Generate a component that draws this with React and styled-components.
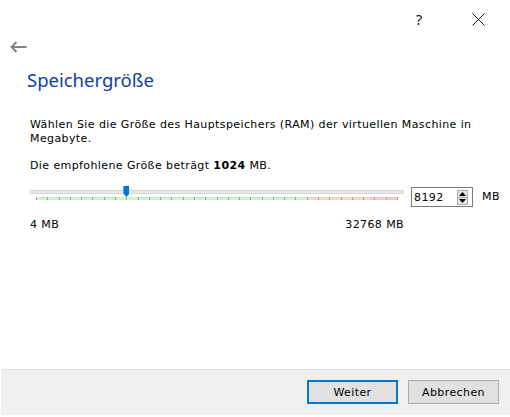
import React from 'react';
import styled, { createGlobalStyle } from 'styled-components';

const GlobalStyle = createGlobalStyle`
    html, body {
        margin: 0;
        padding: 0;
        background: #ffffff;
    }
    * {
        box-sizing: border-box;
    }
`;

const MIN = 4;
const MAX = 32768;
const VALUE = 8192;
const TICKS = 33;

export const Page = styled.div`
    display: flex;
    flex-direction: column;
    width: 510px;
    height: 417px;
    background: #ffffff;
    font-family: "DejaVu Sans", Verdana, sans-serif;
    color: #000000;
`;

export const TopBar = styled.div`
    display: flex;
    justify-content: flex-end;
    align-items: center;
    height: 38px;
    padding-right: 24px;
    gap: 43px;
`;

export const TopButton = styled.div`
    display: flex;
    align-items: center;
    justify-content: center;
    width: 16px;
    height: 16px;
    font-family: "Noto Sans", sans-serif;
    font-size: 15px;
    color: #1a1a1a;
`;

export const BackRow = styled.div`
    height: 18px;
    padding-left: 10px;
    display: flex;
    align-items: center;
`;

export const Content = styled.div`
    flex: 1;
    padding: 0 0 0 30px;
    letter-spacing: 0.4px;
`;

export const Title = styled.div`
    margin: 10px 0 0 -3px;
    font-family: "Noto Sans", "Open Sans", sans-serif;
    font-size: 18.5px;
    letter-spacing: 0;
    color: #0e3fa8;
    height: 52px;
    line-height: 28px;
`;

export const Text = styled.p`
    margin: 0 0 ${(p) => p.gap || 0}px;
    font-size: 11px;
    line-height: 14px;
    padding-right: 20px;
`;

export const SliderRow = styled.div`
    display: flex;
    align-items: flex-start;
    margin-top: 11px;
`;

export const SliderCol = styled.div`
    flex: 0 0 374px;
`;

export const SliderArea = styled.div`
    position: relative;
    height: 20px;
    padding-top: 6px;
`;

export const Track = styled.div`
    height: 4px;
    background: #e7e7e7;
    border: 1px solid #d6d6d6;
`;

export const Thumb = styled.div`
    position: absolute;
    top: 2px;
    width: 6px;
    height: 11px;
    margin-left: -3px;
    background: #0078d7;
    clip-path: polygon(0 0, 100% 0, 100% 70%, 50% 100%, 0 70%);
`;

export const TickBand = styled.div`
    display: flex;
    justify-content: space-between;
    height: 3px;
    margin: 3px 6px 0;
    background: linear-gradient(to right,
        #c6f7c6 0%, #c6f7c6 75%,
        #fdd6bd 75%, #fdd6bd 92.3%,
        #fcc6c6 92.3%, #fcc6c6 100%);
`;

export const Tick = styled.span`
    width: 1px;
    height: 3px;
    background: #a2a29a;
`;

export const RangeLabels = styled.div`
    display: flex;
    justify-content: space-between;
    margin-top: 14px;
    font-size: 11px;
`;

export const SpinBox = styled.div`
    display: flex;
    flex: 0 0 62px;
    align-items: center;
    height: 20px;
    margin: 3px 0 0 7px;
    border: 1px solid #7a7a7a;
    padding: 0 4px 0 2px;
    font-size: 11px;
    background: #ffffff;
`;

export const SpinValue = styled.span`
    flex: 1;
    padding-top: 1px;
`;

export const SpinButtons = styled.div`
    display: flex;
    flex-direction: column;
    width: 11px;
    height: 15px;
    border: 1px solid #adadad;
    background: #e5e5e5;
`;

export const SpinArrow = styled.div`
    flex: 1;
    display: flex;
    align-items: center;
    justify-content: center;
    border-top: ${(p) => (p.down ? '1px solid #adadad' : 'none')};
`;

export const Unit = styled.div`
    margin: 6px 0 0 9px;
    font-size: 11px;
`;

export const Footer = styled.div`
    display: flex;
    justify-content: flex-end;
    align-items: center;
    gap: 10px;
    height: 46px;
    margin: 0 0 2px 1px;
    padding: 0 11px 1px 0;
    background: #f0f0f0;
    border-top: 1px solid #dfdfdf;
`;

export const Button = styled.button`
    width: 91px;
    height: 24px;
    font-family: "DejaVu Sans", Verdana, sans-serif;
    font-size: 11px;
    letter-spacing: 0.4px;
    color: #000000;
    background: #e1e1e1;
    border: ${(p) => (p.primary ? '2px solid #0078d7' : '1px solid #adadad')};
    padding: 0;
`;

function Arrow({ up }) {
    return (
        <svg width="7" height="4" viewBox="0 0 7 4">
            {up
                ? <polygon points="0,4 3.5,0 7,4" fill="#000" />
                : <polygon points="0,0 3.5,4 7,0" fill="#000" />}
        </svg>
    );
}

function App() {
    const pos = ((VALUE - MIN) / (MAX - MIN)) * 362 + 6;

    return (
        <Page>
            <GlobalStyle />
            <TopBar>
                <TopButton>?</TopButton>
                <TopButton>
                    <svg width="13" height="13" viewBox="0 0 13 13">
                        <path d="M0.5 0.5 L12.5 12.5 M12.5 0.5 L0.5 12.5" stroke="#1a1a1a" strokeWidth="1" />
                    </svg>
                </TopButton>
            </TopBar>
            <BackRow>
                <svg width="17" height="12" viewBox="0 0 17 12">
                    <path d="M1.5 6 H16.5 M6.5 1 L1.5 6 L6.5 11" stroke="#838383" strokeWidth="2" fill="none" />
                </svg>
            </BackRow>
            <Content>
                <Title>Speichergröße</Title>
                <Text gap={13}>Wählen Sie die Größe des Hauptspeichers (RAM) der virtuellen Maschine in Megabyte.</Text>
                <Text>Die empfohlene Größe beträgt <b>1024</b> MB.</Text>
                <SliderRow>
                    <SliderCol>
                        <SliderArea>
                            <Track />
                            <Thumb style={{ left: `${pos}px` }} />
                            <TickBand>
                                {Array.from({ length: TICKS }).map((_, i) => (
                                    <Tick key={i} />
                                ))}
                            </TickBand>
                        </SliderArea>
                        <RangeLabels>
                            <span>4 MB</span>
                            <span>32768 MB</span>
                        </RangeLabels>
                    </SliderCol>
                    <SpinBox>
                        <SpinValue>8192</SpinValue>
                        <SpinButtons>
                            <SpinArrow><Arrow up /></SpinArrow>
                            <SpinArrow down><Arrow /></SpinArrow>
                        </SpinButtons>
                    </SpinBox>
                    <Unit>MB</Unit>
                </SliderRow>
            </Content>
            <Footer>
                <Button primary>Weiter</Button>
                <Button>Abbrechen</Button>
            </Footer>
        </Page>
    );
}

export default App;
